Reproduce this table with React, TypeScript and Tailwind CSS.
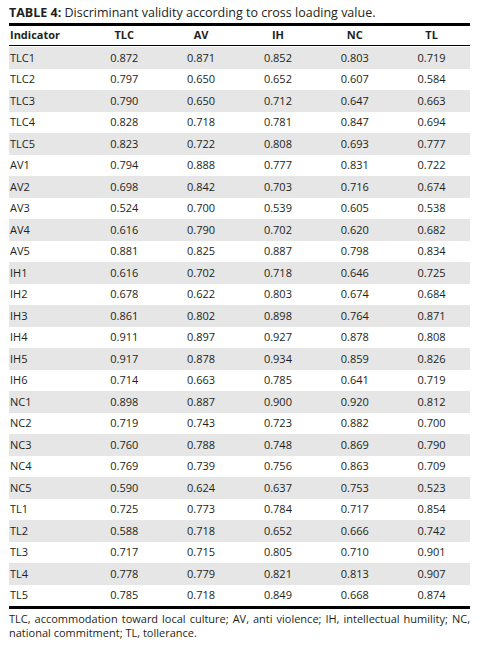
import React from "react";

const rows: [string, string, string, string, string, string][] = [
  ["TLC1", "0.872", "0.871", "0.852", "0.803", "0.719"],
  ["TLC2", "0.797", "0.650", "0.652", "0.607", "0.584"],
  ["TLC3", "0.790", "0.650", "0.712", "0.647", "0.663"],
  ["TLC4", "0.828", "0.718", "0.781", "0.847", "0.694"],
  ["TLC5", "0.823", "0.722", "0.808", "0.693", "0.777"],
  ["AV1", "0.794", "0.888", "0.777", "0.831", "0.722"],
  ["AV2", "0.698", "0.842", "0.703", "0.716", "0.674"],
  ["AV3", "0.524", "0.700", "0.539", "0.605", "0.538"],
  ["AV4", "0.616", "0.790", "0.702", "0.620", "0.682"],
  ["AV5", "0.881", "0.825", "0.887", "0.798", "0.834"],
  ["IH1", "0.616", "0.702", "0.718", "0.646", "0.725"],
  ["IH2", "0.678", "0.622", "0.803", "0.674", "0.684"],
  ["IH3", "0.861", "0.802", "0.898", "0.764", "0.871"],
  ["IH4", "0.911", "0.897", "0.927", "0.878", "0.808"],
  ["IH5", "0.917", "0.878", "0.934", "0.859", "0.826"],
  ["IH6", "0.714", "0.663", "0.785", "0.641", "0.719"],
  ["NC1", "0.898", "0.887", "0.900", "0.920", "0.812"],
  ["NC2", "0.719", "0.743", "0.723", "0.882", "0.700"],
  ["NC3", "0.760", "0.788", "0.748", "0.869", "0.790"],
  ["NC4", "0.769", "0.739", "0.756", "0.863", "0.709"],
  ["NC5", "0.590", "0.624", "0.637", "0.753", "0.523"],
  ["TL1", "0.725", "0.773", "0.784", "0.717", "0.854"],
  ["TL2", "0.588", "0.718", "0.652", "0.666", "0.742"],
  ["TL3", "0.717", "0.715", "0.805", "0.710", "0.901"],
  ["TL4", "0.778", "0.779", "0.821", "0.813", "0.907"],
  ["TL5", "0.785", "0.718", "0.849", "0.668", "0.874"],
];

const headers = ["TLC", "AV", "IH", "NC", "TL"];

export default function App() {
  return (
    <div
      className="w-[482px] h-[646px] bg-white text-[#231f20] pl-[9px] pr-[12px] pt-[4px]"
      style={{ fontFamily: '"Open Sans", sans-serif' }}
    >
      <div className="text-[12.5px] leading-[18px]">
        <span className="font-bold">TABLE 4:</span> Discriminant validity according to cross loading value.
      </div>
      <div className="border-t-[3px] border-black mt-[1px]">
        <div className="grid grid-cols-6 h-[20px] items-center text-[11px] font-bold border-b border-black">
          <div className="pl-[1px]">Indicator</div>
          {headers.map((h) => (
            <div key={h} className="text-center">{h}</div>
          ))}
        </div>
        <div className="pt-[1px]">
          {rows.map((r, i) => (
            <div
              key={r[0]}
              className={`grid grid-cols-6 h-[21.5px] items-center text-[11px] ${i % 2 === 0 ? "bg-[#e6e6e6]" : ""}`}
            >
              <div className="pl-[1px]">{r[0]}</div>
              {r.slice(1).map((v, j) => (
                <div key={j} className="text-center">{v}</div>
              ))}
            </div>
          ))}
        </div>
      </div>
      <div className="border-t-[3px] border-black pt-[3px] text-[11px] leading-[14px] text-justify">
        TLC, accommodation toward local culture; AV, anti violence; IH, intellectual humility; NC, national commitment; TL, tollerance.
      </div>
    </div>
  );
}
